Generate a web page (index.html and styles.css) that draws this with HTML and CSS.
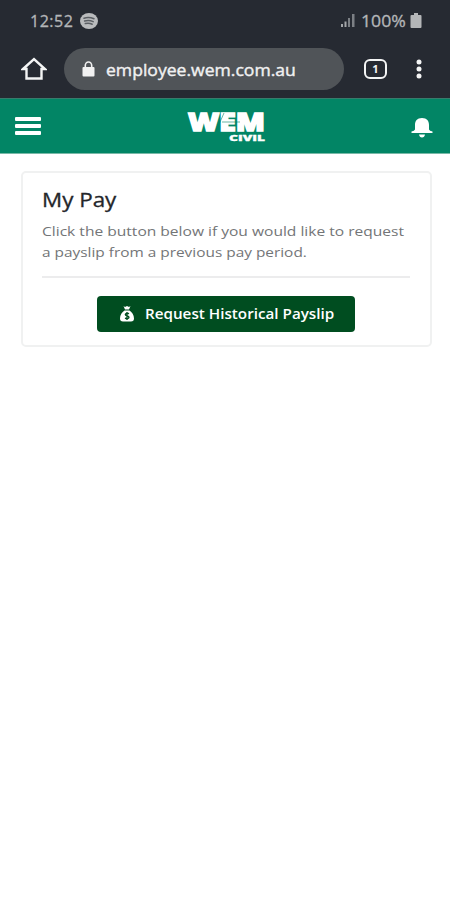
FILE: index.html
```html
<!DOCTYPE html>
<html lang="en">
<head>
<meta charset="utf-8">
<meta name="viewport" content="width=device-width, initial-scale=1">
<title>My Pay</title>
<link rel="stylesheet" href="styles.css">
</head>
<body>
<div class="browser">
  <div class="status">
    <span class="clock">12:52</span>
    <svg class="music" width="18" height="16" viewBox="0 0 18 16"><ellipse cx="9" cy="8" rx="9" ry="8" fill="#b9bbbd"/><path d="M4 5.200q5-1.500 10 .6M4.600 8q4.500-1.200 8.600.6M5.300 10.600q3.700-.9 6.900.6" fill="none" stroke="#5b5f64" stroke-width="1.500" stroke-linecap="round"/></svg>
    <svg class="signal" width="15" height="15" viewBox="0 0 15 15"><path d="M1 11h2v3H1zM4.500 8.500h2V14h-2z" fill="#a3a6a9"/><path d="M8 5h2v9H8zM12 1h2.500v13H12z" fill="#7c8085"/></svg>
    <span class="percent">100%</span>
    <svg class="battery" width="12" height="16" viewBox="0 0 12 16"><path d="M4 0h4v2h2.500q1 0 1 1v11q0 1-1 1h-9q-1 0-1-1V3q0-1 1-1H4z" fill="#b4b6b8"/></svg>
  </div>
  <div class="toolbar">
    <svg class="home" width="26" height="24" viewBox="0 0 26 24"><path d="M2 12 13 2l11 10h-3.500v9.500h-15V12z" fill="none" stroke="#f4f5f5" stroke-width="2.400" stroke-linejoin="miter"/></svg>
    <div class="address">
      <svg class="lock" width="13" height="16" viewBox="0 0 13 16"><path d="M3.300 7V4.500a3.200 3.500 0 0 1 6.400 0V7" fill="none" stroke="#f1f1f1" stroke-width="1.600"/><rect x=".5" y="6" width="12" height="9.500" rx="1" fill="#f1f1f1"/></svg>
      <span class="url">employee.wem.com.au</span>
    </div>
    <span class="tabs">1</span>
    <svg class="more" width="6" height="20" viewBox="0 0 6 20"><circle cx="3" cy="3" r="2.500" fill="#f4f5f5"/><circle cx="3" cy="10" r="2.500" fill="#f4f5f5"/><circle cx="3" cy="17" r="2.500" fill="#f4f5f5"/></svg>
  </div>
</div>
<header class="header">
  <div class="menu"><i></i><i></i><i></i></div>
  <svg class="logo" width="80" height="40" viewBox="0 0 80 40" fill="#fff" stroke="#fff">
    <text class="wem" x="1" y="23" textLength="77" lengthAdjust="spacingAndGlyphs">WEM</text>
    <text class="civil" x="42" y="33" textLength="36" lengthAdjust="spacingAndGlyphs">CIVIL</text>
    <path class="cut" d="M29 23 37 5M35 14h18"/>
  </svg>
  <svg class="bell" width="22" height="22" viewBox="0 0 22 22"><path d="M11 1c5 0 7 3 7 7v4.500q.5 1.500 3.500 2V16H.5v-1.500q3-.5 3.500-2V8c0-4 2-7 7-7zM8 17.500h6q-.5 3-3 3t-3-3z" fill="#fff"/></svg>
</header>
<main>
  <section class="card">
    <h1><span>My Pay</span></h1>
    <p><span class="line one">Click the button below if you would like to request</span><span class="line two">a payslip from a previous pay period.</span></p>
    <hr>
    <button>
      <svg width="14" height="16" viewBox="0 0 14 16"><path d="M3.500 0 5 1l2-1 2 1 1.500-1L9 3.500H5zM4.500 4.500h5c2.500 1.500 4.500 4.500 4.500 8 0 2-1 3-3 3H3c-2 0-3-1-3-3 0-3.500 2-6.500 4.500-8z" fill="#fff"/><path d="M9 7.700C7 6.800 5.300 7.300 5.300 8.500c0 1.700 3.700.9 3.700 2.800 0 1.300-2 1.700-4 .8M7 6v8" fill="none" stroke="#004d20" stroke-width="1.300"/></svg>
      <span class="label">Request Historical Payslip</span>
    </button>
  </section>
</main>
</body>
</html>
```
FILE: styles.css
```css
* { box-sizing: border-box; }
body { margin: 0; background: #fff; font-family: "Open Sans", "Noto Sans", sans-serif; }
svg { display: block; flex: none; }
span { white-space: nowrap; }
.browser { height: 98px; background: #262a32; }
.status { height: 40px; display: flex; align-items: center; padding: 1px 28px 0 30px; color: #b4b6b8; font-size: 16px; -webkit-text-stroke: .3px #b4b6b8; }
.clock { width: 50px; font-size: 16px; letter-spacing: .5px; }
.signal { margin-left: auto; }
.percent { width: 47px; margin: 0 2px 0 6px; transform: scaleX(1.1); transform-origin: left; }
.toolbar { height: 58px; display: flex; align-items: center; padding: 0 28px 0 21px; }
.address { width: 280px; height: 42px; margin-left: 17px; border-radius: 21px; background: #505458; display: flex; align-items: center; padding-left: 18px; color: #f1f1f1; }
.url { margin-left: 11px; font-size: 16.5px; transform: scaleX(1.065); transform-origin: left; -webkit-text-stroke: .4px #f1f1f1; }
.tabs { width: 23px; height: 20px; margin-left: 20px; border: 2px solid #f4f5f5; border-radius: 6px; color: #f4f5f5; font: bold 11px/16px "Open Sans", sans-serif; text-align: center; }
.more { margin-left: auto; }
.header { height: 56px; background: #028565; border-top: 1px solid #377c6c; border-bottom: 1px solid #79b9a7; display: flex; align-items: center; justify-content: space-between; padding: 0 17px 0 15px; }
.menu { width: 26px; display: grid; gap: 3px; }
.menu i { height: 4px; background: #fff; border-radius: 1px; }
.logo { margin: 4px 0 0 2px; }
.wem { font: 800 24px "Open Sans", sans-serif; stroke-width: 1.4px; }
.civil { font: 800 9px "Open Sans", sans-serif; stroke-width: .3px; }
.cut { fill: none; stroke: #028565; stroke-width: .6px; }
.bell { margin-top: 4px; }
main { padding: 17px 18px 0 21px; }
.card { height: 176px; border: 2px solid #f0f1f1; border-radius: 5px; padding: 13px 20px 0 19px; }
h1 { margin: 0; font: 400 20px/28px "Open Sans", sans-serif; color: #24262a; -webkit-text-stroke: .3px #24262a; }
p { margin: 7px 0 0; font-size: 13.5px; line-height: 21px; color: #737577; }
h1 span, .line, .label { display: block; width: max-content; transform-origin: left; }
h1 span { transform: scaleX(1.12); }
.one { transform: scaleX(1.153); }
.two { transform: scaleX(1.14); }
hr { height: 2px; margin: 13px 0 18px; border: 0; background: #ececed; }
button { width: 258px; height: 36px; margin: 0 0 0 55px; padding: 0 0 0 23px; border: 0; border-radius: 4px; background: #004d20; display: flex; align-items: center; color: #fff; font: 600 13.5px "Open Sans", sans-serif; }
.label { margin-left: 11px; transform: scaleX(1.127); }
```
